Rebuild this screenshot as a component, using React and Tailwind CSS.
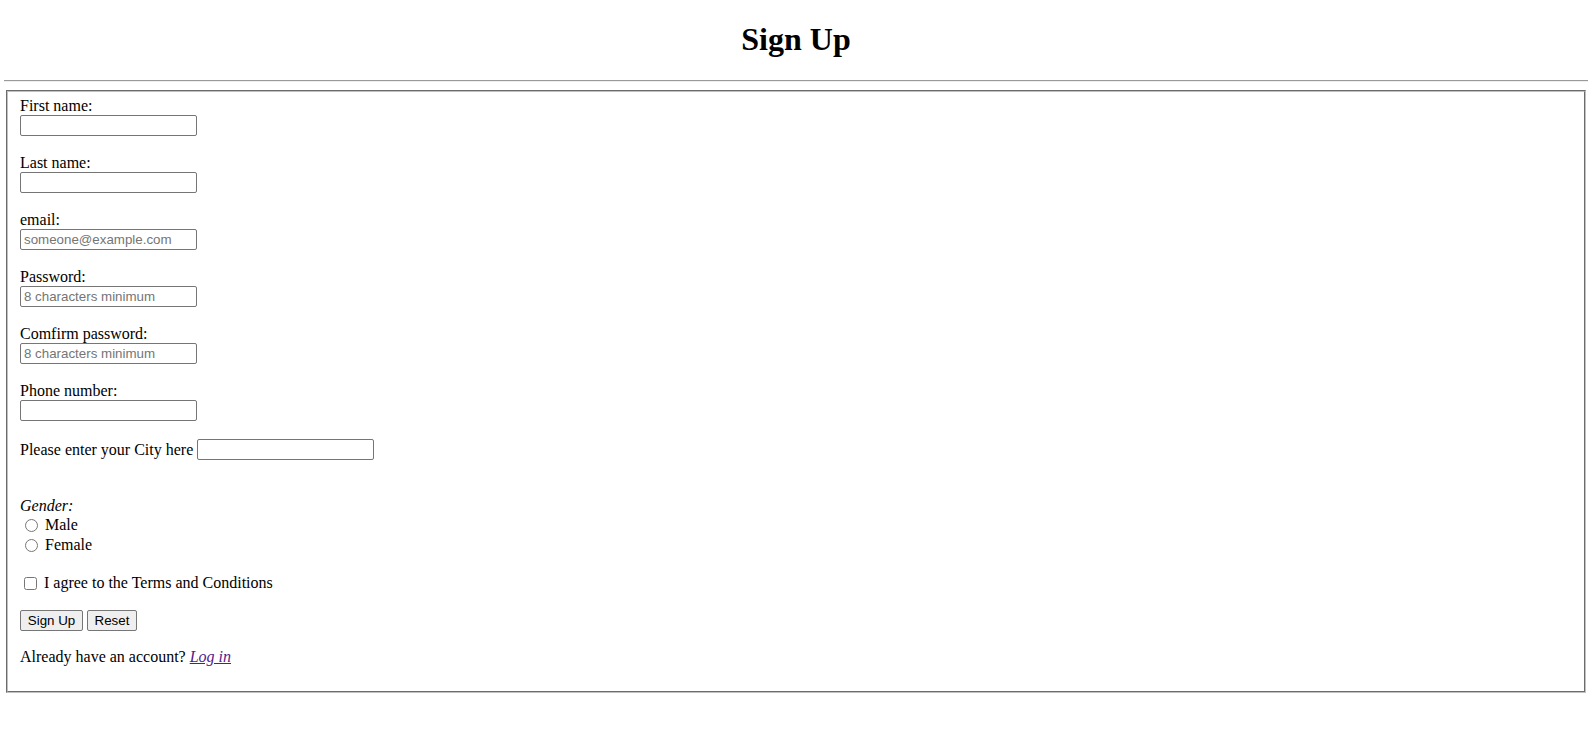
import { useState } from "react";

const serif = "font-['Liberation_Serif','Times_New_Roman',serif]";
const inputCls =
  "block w-[177px] h-[21px] border border-[#767676] rounded-[2px] bg-white pl-[3px] pr-[2px] text-[13.33px] font-['Liberation_Sans',Arial,sans-serif] text-black placeholder:text-[#757575] outline-none";
const btnCls =
  "h-[21px] bg-[#efefef] border border-[#767676] rounded-[2px] text-[13.33px] font-['Liberation_Sans',Arial,sans-serif] text-black leading-none";

function Field({ label, type = "text", placeholder }) {
  return (
    <div className="flex flex-col mb-[18px]">
      <span className="h-[18px] leading-[18px]">{label}</span>
      <input type={type} placeholder={placeholder} className={inputCls} />
    </div>
  );
}

function App() {
  const [gender, setGender] = useState("");
  const [agree, setAgree] = useState(false);

  const fields = [
    { label: "First name:" },
    { label: "Last name:" },
    { label: "email:", type: "email", placeholder: "someone@example.com" },
    { label: "Password:", type: "password", placeholder: "8 characters minimum" },
    { label: "Comfirm password:", type: "password", placeholder: "8 characters minimum" },
    { label: "Phone number:", type: "tel" },
  ];

  return (
    <div className={`min-h-[743px] bg-white text-black text-[16px] ${serif} pt-[21px] pl-[4px] pr-[8px]`}>
      <h1 className="h-[37px] leading-[37px] text-center text-[32px] font-bold">Sign Up</h1>
      <hr className="mt-[22px] h-0 border-0 border-t border-t-[#9a9a9a] border-b border-b-[#eeeeee]" />

      <form
        className="mt-[8px] mx-[2px] border-2 border-[#c0c0c0] [border-style:groove] pt-[5px] pb-[9px] px-[12px]"
        onSubmit={(e) => e.preventDefault()}
      >
        {fields.map((f) => (
          <Field key={f.label} {...f} />
        ))}

        <div className="flex items-center h-[21px]">
          <span className="leading-[18px]">Please enter your City here&nbsp;</span>
          <input type="text" className={inputCls} />
        </div>

        <div className="mt-[37px] h-[18px] leading-[18px] italic">Gender:</div>
        {["Male", "Female"].map((g) => (
          <label key={g} className="flex items-center h-[20px]">
            <input
              type="radio"
              name="gender"
              checked={gender === g}
              onChange={() => setGender(g)}
              className="m-0 ml-[5px] mr-[7px] w-[13px] h-[13px]"
            />
            <span className="leading-[18px]">{g}</span>
          </label>
        ))}

        <label className="mt-[18px] flex items-center h-[20px]">
          <input
            type="checkbox"
            checked={agree}
            onChange={(e) => setAgree(e.target.checked)}
            className="m-0 ml-[4px] mr-[7px] w-[13px] h-[13px]"
          />
          <span className="leading-[18px]">I agree to the Terms and Conditions</span>
        </label>

        <div className="mt-[17px] flex gap-[4px] h-[21px]">
          <button type="submit" className={`${btnCls} w-[63px]`}>Sign Up</button>
          <button type="reset" className={`${btnCls} w-[50px]`} onClick={() => { setGender(""); setAgree(false); }}>Reset</button>
        </div>

        <p className="mt-[17px] mb-[16px] h-[18px] leading-[18px]">
          Already have an account?{" "}
          <a href="#" className="italic underline text-[#551a8b]">Log in</a>
        </p>
      </form>
    </div>
  );
}

export default App;
